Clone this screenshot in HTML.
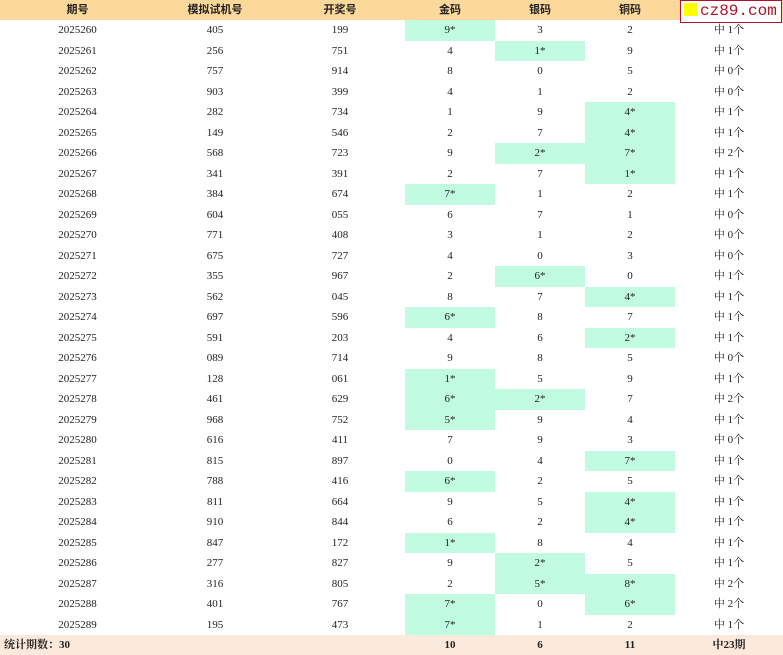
<!DOCTYPE html>
<html><head><meta charset="utf-8"><style>
body{margin:0;width:783px;height:654px;overflow:hidden;background:#fff;font-family:"Liberation Serif","Noto Serif CJK SC",serif;font-size:11px;color:#222}
table{border-collapse:collapse;table-layout:fixed;width:783px}
td{text-align:center;padding:0;height:20.5px;line-height:20px}
tr.h td{background:#fdd89b;font-weight:bold;height:20px;font-family:"Liberation Sans","Noto Sans CJK SC",sans-serif}
tr.f td{background:#fbe9dc;font-weight:bold;height:19px}
.g{background:#c1fce2}
.logo{position:absolute;left:680px;top:0;width:100px;height:21px;background:#fff;border:1px solid #b0102a;color:#b0102a;font:16px "Liberation Mono",monospace;line-height:21px;white-space:nowrap;overflow:hidden}
.logo i{display:inline-block;width:13px;height:13px;background:#ffff00;margin:0 3px 0 3px;vertical-align:-1px}
</style></head><body>
<table>
<colgroup><col style="width:155px"><col style="width:120px"><col style="width:130px"><col style="width:90px"><col style="width:90px"><col style="width:90px"><col style="width:108px"></colgroup>
<tr class="h"><td>期号</td><td>模拟试机号</td><td>开奖号</td><td>金码</td><td>银码</td><td>铜码</td><td></td></tr>
<tr><td>2025260</td><td>405</td><td>199</td><td class="g">9*</td><td>3</td><td>2</td><td>中 1个</td></tr>
<tr><td>2025261</td><td>256</td><td>751</td><td>4</td><td class="g">1*</td><td>9</td><td>中 1个</td></tr>
<tr><td>2025262</td><td>757</td><td>914</td><td>8</td><td>0</td><td>5</td><td>中 0个</td></tr>
<tr><td>2025263</td><td>903</td><td>399</td><td>4</td><td>1</td><td>2</td><td>中 0个</td></tr>
<tr><td>2025264</td><td>282</td><td>734</td><td>1</td><td>9</td><td class="g">4*</td><td>中 1个</td></tr>
<tr><td>2025265</td><td>149</td><td>546</td><td>2</td><td>7</td><td class="g">4*</td><td>中 1个</td></tr>
<tr><td>2025266</td><td>568</td><td>723</td><td>9</td><td class="g">2*</td><td class="g">7*</td><td>中 2个</td></tr>
<tr><td>2025267</td><td>341</td><td>391</td><td>2</td><td>7</td><td class="g">1*</td><td>中 1个</td></tr>
<tr><td>2025268</td><td>384</td><td>674</td><td class="g">7*</td><td>1</td><td>2</td><td>中 1个</td></tr>
<tr><td>2025269</td><td>604</td><td>055</td><td>6</td><td>7</td><td>1</td><td>中 0个</td></tr>
<tr><td>2025270</td><td>771</td><td>408</td><td>3</td><td>1</td><td>2</td><td>中 0个</td></tr>
<tr><td>2025271</td><td>675</td><td>727</td><td>4</td><td>0</td><td>3</td><td>中 0个</td></tr>
<tr><td>2025272</td><td>355</td><td>967</td><td>2</td><td class="g">6*</td><td>0</td><td>中 1个</td></tr>
<tr><td>2025273</td><td>562</td><td>045</td><td>8</td><td>7</td><td class="g">4*</td><td>中 1个</td></tr>
<tr><td>2025274</td><td>697</td><td>596</td><td class="g">6*</td><td>8</td><td>7</td><td>中 1个</td></tr>
<tr><td>2025275</td><td>591</td><td>203</td><td>4</td><td>6</td><td class="g">2*</td><td>中 1个</td></tr>
<tr><td>2025276</td><td>089</td><td>714</td><td>9</td><td>8</td><td>5</td><td>中 0个</td></tr>
<tr><td>2025277</td><td>128</td><td>061</td><td class="g">1*</td><td>5</td><td>9</td><td>中 1个</td></tr>
<tr><td>2025278</td><td>461</td><td>629</td><td class="g">6*</td><td class="g">2*</td><td>7</td><td>中 2个</td></tr>
<tr><td>2025279</td><td>968</td><td>752</td><td class="g">5*</td><td>9</td><td>4</td><td>中 1个</td></tr>
<tr><td>2025280</td><td>616</td><td>411</td><td>7</td><td>9</td><td>3</td><td>中 0个</td></tr>
<tr><td>2025281</td><td>815</td><td>897</td><td>0</td><td>4</td><td class="g">7*</td><td>中 1个</td></tr>
<tr><td>2025282</td><td>788</td><td>416</td><td class="g">6*</td><td>2</td><td>5</td><td>中 1个</td></tr>
<tr><td>2025283</td><td>811</td><td>664</td><td>9</td><td>5</td><td class="g">4*</td><td>中 1个</td></tr>
<tr><td>2025284</td><td>910</td><td>844</td><td>6</td><td>2</td><td class="g">4*</td><td>中 1个</td></tr>
<tr><td>2025285</td><td>847</td><td>172</td><td class="g">1*</td><td>8</td><td>4</td><td>中 1个</td></tr>
<tr><td>2025286</td><td>277</td><td>827</td><td>9</td><td class="g">2*</td><td>5</td><td>中 1个</td></tr>
<tr><td>2025287</td><td>316</td><td>805</td><td>2</td><td class="g">5*</td><td class="g">8*</td><td>中 2个</td></tr>
<tr><td>2025288</td><td>401</td><td>767</td><td class="g">7*</td><td>0</td><td class="g">6*</td><td>中 2个</td></tr>
<tr><td>2025289</td><td>195</td><td>473</td><td class="g">7*</td><td>1</td><td>2</td><td>中 1个</td></tr>
<tr class="f"><td style="text-align:left;padding-left:4px">统计期数：30</td><td></td><td></td><td>10</td><td>6</td><td>11</td><td>中23期</td></tr>
</table>
<div class="logo"><i></i>cz89.com</div>
</body></html>
